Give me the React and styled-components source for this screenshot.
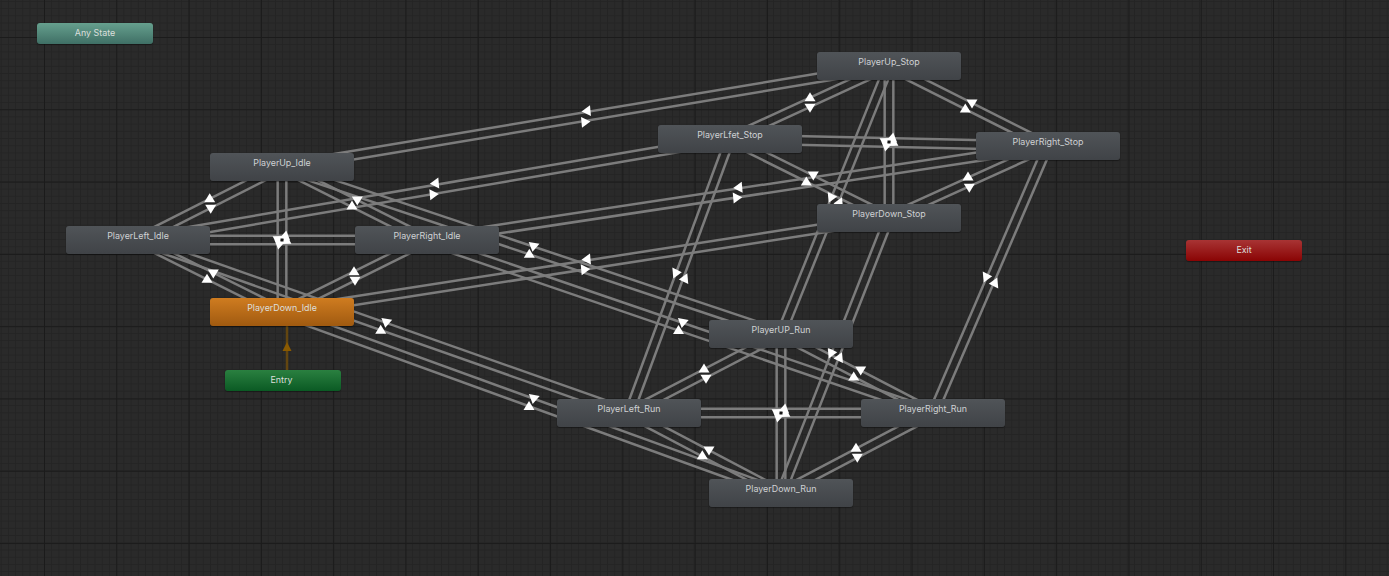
import React from "react";
import styled, { createGlobalStyle } from "styled-components";

const Global = createGlobalStyle`
  html, body { margin: 0; padding: 0; background: #282828; overflow: hidden; }
  #root { width: 1389px; height: 576px; }
`;

const Canvas = styled.div`
  position: relative;
  width: 1389px;
  height: 576px;
  overflow: hidden;
  background-color: #2a2a2a;
  background-image:
    linear-gradient(to right, #1b1b1b 1px, transparent 1px),
    linear-gradient(to bottom, #1b1b1b 1px, transparent 1px),
    linear-gradient(to right, #242424 1px, transparent 1px),
    linear-gradient(to bottom, #242424 1px, transparent 1px);
  background-size: 72.3px 72.3px, 72.3px 72.3px, 7.23px 7.23px, 7.23px 7.23px;
  background-position: 44px 37px, 44px 37px, 44px 37px, 44px 37px;
`;

const Wires = styled.svg`
  position: absolute;
  inset: 0;
  width: 1389px;
  height: 576px;
`;

const palettes = {
  normal: "linear-gradient(#505458, #404347)",
  any: "linear-gradient(#66a08e, #3f6f65)",
  entry: "linear-gradient(#2a8040, #0b5a24)",
  exit: "linear-gradient(#a83434, #8a0404)",
  active: "linear-gradient(#cf7c20, #a05a10)",
};

const Node = styled.div`
  position: absolute;
  left: ${(p) => p.$x}px;
  top: ${(p) => p.$y}px;
  width: ${(p) => (p.$small ? 116 : 144)}px;
  height: ${(p) => (p.$small ? 21 : 28)}px;
  box-sizing: border-box;
  border-radius: 3px;
  background: ${(p) => palettes[p.$kind]};
  box-shadow: 0 1px 1px rgba(0, 0, 0, 0.35);
  color: ${(p) => (p.$kind === "normal" ? "#cfd1d3" : "#dcdfdc")};
  font-family: Inter, "Liberation Sans", sans-serif;
  font-size: 8.9px;
  line-height: 12px;
  padding-top: 4px;
  padding-right: ${(p) => (p.$kind === "entry" ? 3 : 0)}px;
  text-align: center;
  white-space: nowrap;
`;

const W = 144;
const H = 28;
const states = {
  upI: ["PlayerUp_Idle", 210, 153],
  leftI: ["PlayerLeft_Idle", 66, 226],
  rightI: ["PlayerRight_Idle", 355, 226],
  downI: ["PlayerDown_Idle", 210, 298, "active"],
  upS: ["PlayerUp_Stop", 817, 52],
  leftS: ["PlayerLfet_Stop", 658, 125],
  rightS: ["PlayerRight_Stop", 976, 132],
  downS: ["PlayerDown_Stop", 817, 204],
  upR: ["PlayerUP_Run", 709, 320],
  leftR: ["PlayerLeft_Run", 557, 399],
  rightR: ["PlayerRight_Run", 861, 399],
  downR: ["PlayerDown_Run", 709, 479],
};

const smallStates = [
  ["Any State", 37, 23, "any"],
  ["Entry", 225, 370, "entry"],
  ["Exit", 1186, 240, "exit"],
];

const edges = [
  ["upI", "leftI"], ["upI", "rightI"], ["upI", "downI"], ["leftI", "rightI"], ["leftI", "downI"], ["rightI", "downI"],
  ["upS", "leftS"], ["upS", "rightS"], ["upS", "downS"], ["leftS", "rightS"], ["leftS", "downS"], ["rightS", "downS"],
  ["upR", "leftR"], ["upR", "rightR"], ["upR", "downR"], ["leftR", "rightR"], ["leftR", "downR"], ["rightR", "downR"],
  ["upI", "upS"], ["leftI", "leftS"], ["rightI", "rightS"], ["downI", "downS"],
  ["upI", "upR"], ["leftI", "leftR"], ["rightI", "rightR"], ["downI", "downR"],
  ["upS", "upR"], ["leftS", "leftR"], ["rightS", "rightR"], ["downS", "downR"],
];

const pinwheel = (cx, cy) => [
  [cx + 3.5, cy - 5, 10],
  [cx - 5.5, cy - 1.5, 300],
  [cx - 3, cy + 5, 190],
  [cx + 5.5, cy + 1.5, 120],
];

const hubs = [[282, 240], [889, 142], [781, 413]];

const arrows = [
  // idle ring
  [209.7, 197.7, 0], [210.7, 209.3, 180],
  [352, 205, 0], [357.3, 201, 180],
  [207, 278.3, 0], [213.3, 274, 180],
  [354, 270.7, 0], [355, 281.3, 180],
  ...pinwheel(...hubs[0]),
  // stop ring
  [810, 96.7, 0], [810, 108.3, 180],
  [965.3, 108, 0], [972, 104, 180],
  [806.3, 181, 0], [813.3, 176, 180],
  [968, 176, 0], [969.3, 188.3, 180],
  ...pinwheel(...hubs[1]),
  // run ring
  [704, 368, 0], [706, 379.3, 180],
  [853.7, 376, 0], [860.7, 371, 180],
  [702.3, 454.7, 0], [709, 451, 180],
  [856, 447.3, 0], [857.3, 458.3, 180],
  ...pinwheel(...hubs[2]),
  // idle to stop
  [586, 111, 265], [586, 122, 85],
  [434.3, 183.3, 265], [434.3, 194.3, 85],
  [737.7, 187.7, 265], [737.7, 197.7, 85],
  [586, 259.3, 265], [585.7, 269.3, 85],
  // idle to run
  [533.3, 247.3, 190], [529.3, 253.3, 0],
  [380.7, 329.3, 0], [386, 323.3, 190],
  [682.5, 323.5, 190], [678.5, 329.5, 0],
  [533.5, 399.5, 190], [529, 405.5, 0],
  // stop to run
  [677.3, 272.7, 85], [683.3, 279, 265],
  [987.7, 276.7, 85], [993.3, 283.3, 265],
  [832.7, 197, 85], [838, 203, 265],
  [832.7, 352.7, 85], [838, 358, 265],
];

const centre = (key) => {
  const [, x, y] = states[key];
  return [x + W / 2, y + H / 2];
};

const wirePair = (a, b) => {
  const [ax, ay] = centre(a);
  const [bx, by] = centre(b);
  const len = Math.hypot(bx - ax, by - ay);
  const nx = (-(by - ay) / len) * 4.33;
  const ny = ((bx - ax) / len) * 4.33;
  return [1, -1].map((s) => ({
    x1: ax + s * nx,
    y1: ay + s * ny,
    x2: bx + s * nx,
    y2: by + s * ny,
  }));
};

export default function App() {
  return (
    <Canvas>
      <Global />
      <Wires viewBox="0 0 1389 576">
        {edges.flatMap(([a, b]) =>
          wirePair(a, b).map((l, i) => (
            <line key={a + b + i} {...l} stroke="#7c7c7c" strokeWidth="2.5" />
          ))
        )}
        {arrows.map(([x, y, r], i) => (
          <polygon
            key={i}
            points="0,-4.5 5.5,4.5 -5.5,4.5"
            fill="#ffffff"
            transform={`translate(${x} ${y}) rotate(${r})`}
          />
        ))}
        {hubs.map(([x, y]) => (
          <rect key={x} x={x - 1.5} y={y - 1.5} width="3" height="3" fill="#161616" />
        ))}
        <line x1="287" y1="326" x2="287" y2="370" stroke="#634610" strokeWidth="2.5" />
        <polygon points="287,342 291.5,351 282.5,351" fill="#8a5a00" />
      </Wires>
      {Object.entries(states).map(([key, [label, x, y, kind]]) => (
        <Node key={key} $x={x} $y={y} $kind={kind || "normal"}>
          {label}
        </Node>
      ))}
      {smallStates.map(([label, x, y, kind]) => (
        <Node key={label} $x={x} $y={y} $kind={kind} $small>
          {label}
        </Node>
      ))}
    </Canvas>
  );
}
